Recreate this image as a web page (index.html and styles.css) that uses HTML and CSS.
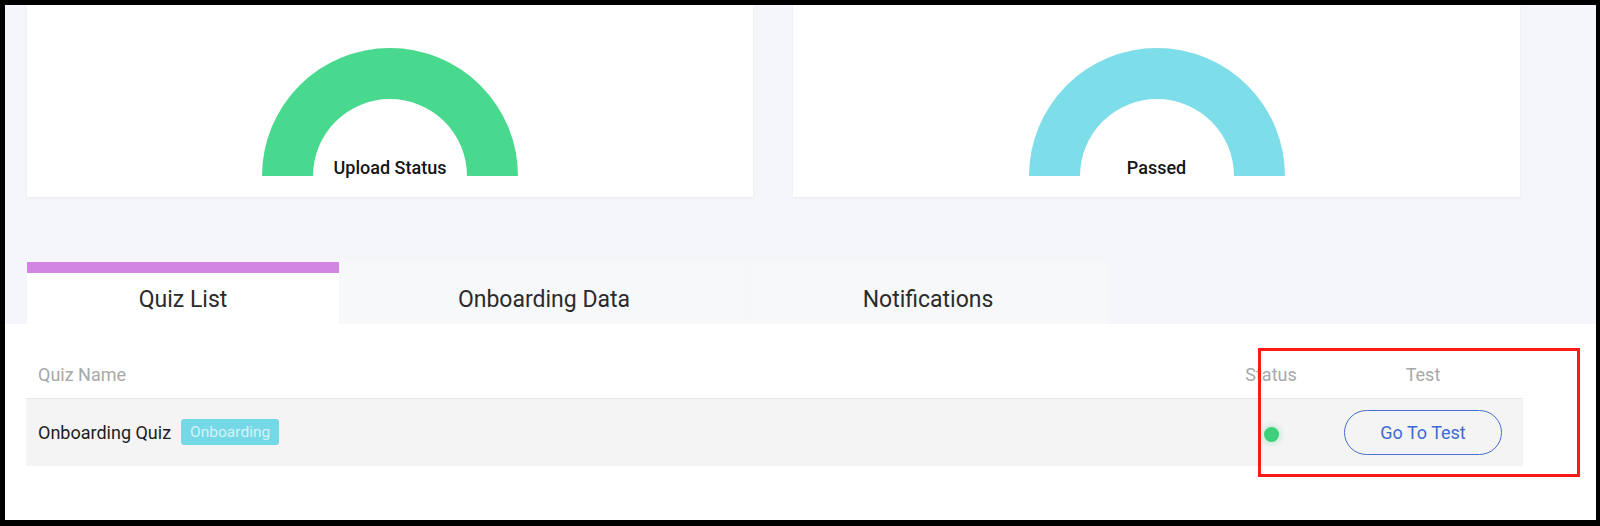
FILE: index.html
```html
<!DOCTYPE html>
<html lang="en">
<head>
<meta charset="utf-8">
<title>Quiz Dashboard</title>
<link rel="stylesheet" href="styles.css">
</head>
<body>
<div class="screen">
  <section class="charts">
    <div class="card">
      <div class="gauge">
        <svg class="gauge-svg" width="256" height="128" viewBox="0 0 256 128">
          <path class="arc-green" d="M0 128 A128 128 0 0 1 256 128 L205 128 A77 77 0 0 0 51 128 Z"/>
        </svg>
        <span class="gauge-label">Upload Status</span>
      </div>
    </div>
    <div class="card">
      <div class="gauge">
        <svg class="gauge-svg" width="256" height="128" viewBox="0 0 256 128">
          <path class="arc-cyan" d="M0 128 A128 128 0 0 1 256 128 L205 128 A77 77 0 0 0 51 128 Z"/>
        </svg>
        <span class="gauge-label">Passed</span>
      </div>
    </div>
  </section>

  <nav class="tabs">
    <div class="tab tab-active tab-quiz">Quiz List</div>
    <div class="tab tab-onboarding">Onboarding Data</div>
    <div class="tab tab-notif">Notifications</div>
  </nav>

  <section class="panel">
    <table class="quiz-table">
      <thead>
        <tr>
          <th class="col-name">Quiz Name</th>
          <th class="col-status">Status</th>
          <th class="col-test">Test</th>
        </tr>
      </thead>
      <tbody>
        <tr>
          <td class="col-name"><span class="quiz-name">Onboarding Quiz</span><span class="badge">Onboarding</span></td>
          <td class="col-status"><span class="dot"></span></td>
          <td class="col-test"><button class="go-btn">Go To Test</button></td>
        </tr>
      </tbody>
    </table>
  </section>

  <div class="annotation"></div>
</div>
</body>
</html>
```

FILE: styles.css
```css
* { box-sizing: border-box; }

html, body {
  margin: 0;
  padding: 0;
  background: #000;
  height: 526px;
  overflow: hidden;
}

body {
  font-family: Roboto, "Noto Sans", Arial, sans-serif;
}

.screen {
  position: relative;
  margin: 5px 4px 6px 5px;
  width: 1591px;
  height: 515px;
  background: #f4f6f9;
  display: flex;
  flex-direction: column;
  overflow: hidden;
}

.charts {
  height: 257px;
  flex: none;
  display: flex;
  gap: 40px;
  padding-left: 22px;
  align-items: flex-start;
}

.card {
  width: 726px;
  height: 192px;
  background: #fff;
  box-shadow: 0 1px 2px rgba(0, 0, 0, 0.06);
  display: flex;
  justify-content: center;
  padding-top: 43px;
}

.card + .card { width: 727px; }

.gauge {
  position: relative;
  width: 256px;
  height: 128px;
}

.gauge-svg { display: block; }

.arc-green { fill: #48d88e; }
.arc-cyan { fill: #7ddde9; }

.gauge-label {
  position: absolute;
  left: 0;
  right: 0;
  bottom: -2px;
  text-align: center;
  font-size: 18px;
  line-height: 20px;
  font-weight: 500;
  color: #151515;
}

.tabs {
  height: 62px;
  flex: none;
  display: flex;
  padding-left: 22px;
}

.tab {
  height: 62px;
  display: flex;
  align-items: center;
  justify-content: center;
  font-size: 23px;
  color: #2b2b2b;
  background: #f7f8fa;
  padding-top: 13px;
}

.tab-quiz { width: 312px; }
.tab-onboarding { width: 408px; margin-left: 1px; }
.tab-notif { width: 358px; margin-left: 1px; }

.tab-active {
  background: #fff;
  border-top: 11px solid #d285e2;
  padding-top: 2px;
}

.panel {
  flex: 1;
  background: #fff;
  padding: 28px 0 0 21px;
}

.quiz-table {
  width: 1497px;
  border-collapse: collapse;
  font-size: 18px;
}

.quiz-table th {
  height: 46px;
  font-weight: 400;
  color: #a8a8a8;
  border-bottom: 1px solid #e8e8e8;
  padding: 0;
  vertical-align: middle;
}

.quiz-table td {
  height: 68px;
  background: #f4f4f4;
  padding: 0;
  vertical-align: middle;
}

.col-name {
  text-align: left;
  padding-left: 12px !important;
}

.col-status {
  width: 104px;
  text-align: center;
}

.col-test {
  width: 200px;
  text-align: center;
}

.quiz-name {
  color: #1d1d1d;
  vertical-align: middle;
}

.badge {
  display: inline-block;
  vertical-align: middle;
  margin-left: 10px;
  height: 26px;
  line-height: 26px;
  padding: 0 9px;
  font-size: 15.5px;
  background: #75d8e6;
  color: #d4f4f8;
  border-radius: 3px;
}

.dot {
  display: inline-block;
  width: 15px;
  height: 15px;
  border-radius: 50%;
  background: #3ecf79;
  box-shadow: 0 0 4px 3px rgba(62, 207, 121, 0.18);
  vertical-align: middle;
}

.go-btn {
  width: 158px;
  height: 45px;
  border: 1px solid #4a6fd0;
  border-radius: 23px;
  background: transparent;
  color: #3d6bd6;
  font-family: Roboto, "Noto Sans", Arial, sans-serif;
  font-size: 18px;
  cursor: pointer;
}

.annotation {
  position: absolute;
  left: 1253px;
  top: 343px;
  width: 322px;
  height: 129px;
  border: 3px solid #ff1a1a;
  pointer-events: none;
}
```
